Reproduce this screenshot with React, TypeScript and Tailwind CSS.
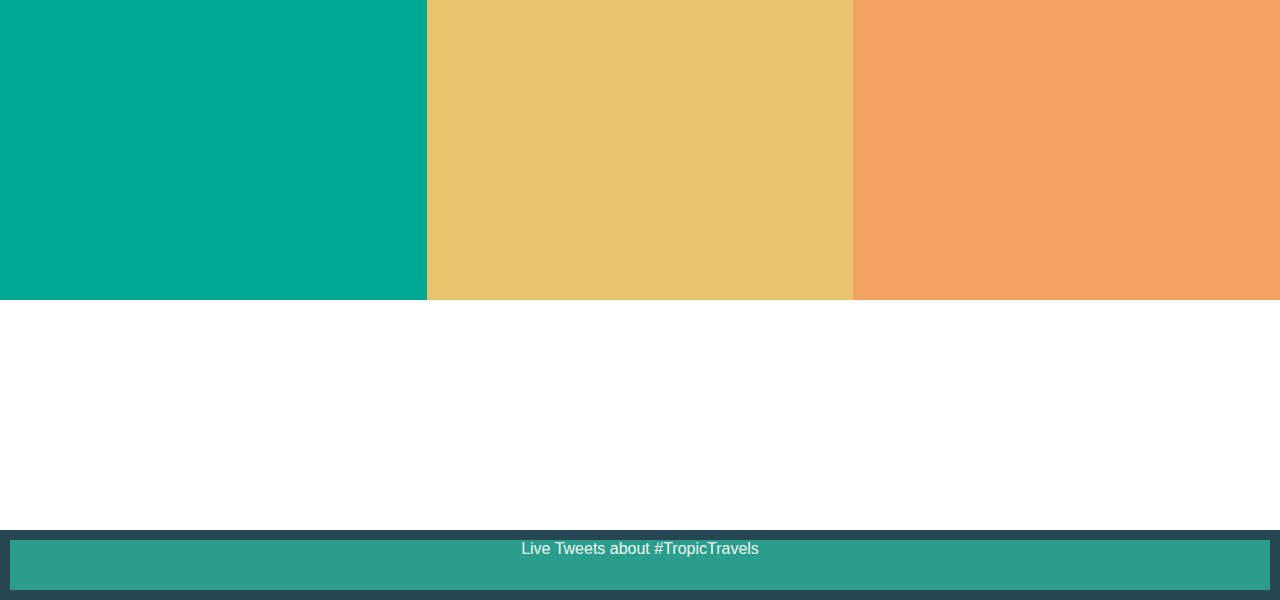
export default function App() {
  return (
    <div className="flex h-[600px] flex-col bg-white font-['Liberation_Sans',Arial,sans-serif]">
      {/* Colour panels */}
      <div className="grid h-[300px] grid-cols-3">
        <div className="bg-[#00a896]" />
        <div className="bg-[#e9c46a]" />
        <div className="bg-[#f4a261]" />
      </div>

      <div className="flex-1" />

      {/* Footer */}
      <footer className="h-[70px] bg-[#264653] p-[10px]">
        <div className="h-[50px] bg-[#2a9d8f] text-center text-base leading-[18px] text-[#f1faee]">
          Live Tweets about #TropicTravels
        </div>
      </footer>
    </div>
  )
}
